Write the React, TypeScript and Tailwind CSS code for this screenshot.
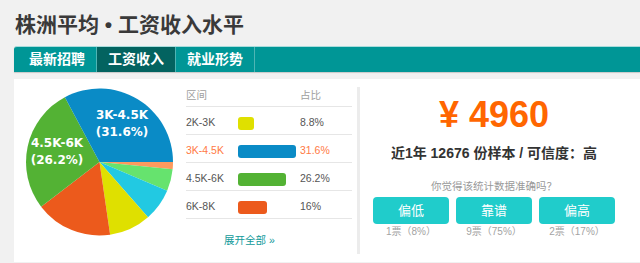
import React from "react";

const slices = [
  { from: 0, to: 5.7, color: "#fd9a5e" },
  { from: 5.7, to: 23, color: "#66e36e" },
  { from: 23, to: 48.7, color: "#22c9e2" },
  { from: 48.7, to: 81.7, color: "#dfe000" },
  { from: 81.7, to: 142.6, color: "#ec5a1c" },
  { from: 142.6, to: 241.9, color: "#53b234" },
  { from: 241.9, to: 360, color: "#0a8bc6" },
];

const rows = [
  { range: "2K-3K", pct: "8.8%", bar: "w-[16px] bg-[#dfe000]", hot: false },
  { range: "3K-4.5K", pct: "31.6%", bar: "w-[58px] bg-[#0a8bc6]", hot: true },
  { range: "4.5K-6K", pct: "26.2%", bar: "w-[48px] bg-[#53b234]", hot: false },
  { range: "6K-8K", pct: "16%", bar: "w-[29px] bg-[#ec5a1c]", hot: false },
];

const votes = [
  { label: "偏低", count: "1票（8%）" },
  { label: "靠谱", count: "9票（75%）" },
  { label: "偏高", count: "2票（17%）" },
];

function slicePath(cx: number, cy: number, r: number, a0: number, a1: number) {
  const p = (a: number) => {
    const t = (a * Math.PI) / 180;
    return `${(cx + r * Math.cos(t)).toFixed(2)} ${(cy + r * Math.sin(t)).toFixed(2)}`;
  };
  const large = a1 - a0 > 180 ? 1 : 0;
  return `M ${cx} ${cy} L ${p(a0)} A ${r} ${r} 0 ${large} 1 ${p(a1)} Z`;
}

function Pie() {
  const cx = 85.5;
  const cy = 83;
  const r = 73.5;
  return (
    <svg width="172" height="183" className="shrink-0">
      {slices.map((s) => (
        <path key={s.from} d={slicePath(cx, cy, r, s.from, s.to)} fill={s.color} />
      ))}
      <g fill="#fff" fontFamily="'DejaVu Sans', sans-serif" fontWeight="bold" fontSize="12" textAnchor="middle">
        <text x="108" y="39.5">3K-4.5K</text>
        <text x="108" y="57">(31.6%)</text>
        <text x="43" y="68">4.5K-6K</text>
        <text x="43" y="84.5">(26.2%)</text>
      </g>
    </svg>
  );
}

export default function App() {
  return (
    <div className="w-[640px] h-[263px] overflow-hidden bg-[#f1f1f1] pl-[14px] font-['Liberation_Sans','Noto_Sans_CJK_SC',sans-serif]">
      <h1 className="pt-[10px] h-[40px] leading-[30px] text-[21px] font-bold text-[#3a3a3a] pl-[1px]">
        株洲平均 • 工资收入水平
      </h1>

      {/* tabs */}
      <div className="mt-[6px] h-[26px] flex rounded-tl-[3px] bg-[#009696] border-t border-[#a9dcdc] shadow-[0_1px_1px_#c8c8c8] text-white text-[14px] font-bold">
        <div className="w-[83px] flex items-center justify-center pl-[4px] border-r border-[#4fb5b4]">最新招聘</div>
        <div className="w-[79px] flex items-center justify-center bg-[#036360] border-r border-[#4fb5b4]">工资收入</div>
        <div className="w-[79px] flex items-center justify-center border-r border-[#4fb5b4]">就业形势</div>
      </div>

      {/* panel */}
      <div className="mt-[7px] h-[183px] bg-white flex">
        <Pie />

        <div className="w-[166px] pt-[6px] text-[10.5px] text-[#555] shrink-0">
          <div className="h-[22px] flex items-center border-b border-[#e6e6e6] text-[#a0a0a0]">
            <span className="w-[114px]">区间</span>
            <span>占比</span>
          </div>
          {rows.map((r) => (
            <div
              key={r.range}
              className={`h-[28px] pt-[5px] flex items-center border-b border-[#e6e6e6] ${r.hot ? "text-[#ff7a45]" : ""}`}
            >
              <span className="w-[52px]">{r.range}</span>
              <span className="w-[62px]">
                <span className={`block h-[13px] rounded-[3px] ${r.bar}`} />
              </span>
              <span>{r.pct}</span>
            </div>
          ))}
          <div className="pl-[38px] pt-[14px] text-[#109a9a] text-[10.5px]">展开全部 »</div>
        </div>

        <div className="ml-[5px] mt-[8px] mb-[8px] w-[3px] bg-[#ececec] shrink-0" />

        <div className="w-[268px] flex flex-col items-center pt-[18px]">
          <div className="leading-[36px] text-[36px] font-bold text-[#ff6600]">¥ 4960</div>
          <div className="mt-[10px] leading-[20px] text-[14px] font-bold text-[#333]">
            近1年 12676 份样本 / 可信度：高
          </div>
          <div className="mt-[15px] leading-[16px] text-[10.5px] text-[#999]">你觉得该统计数据准确吗？</div>
          <div className="mt-[3px] flex gap-[7px]">
            {votes.map((v) => (
              <div key={v.label} className="w-[76px] flex flex-col items-center">
                <div className="w-full h-[27px] rounded-[4px] bg-[#20cccb] flex items-center justify-center text-white text-[13px]">
                  {v.label}
                </div>
                <div className="mt-[1px] leading-[14px] text-[10px] text-[#a3a3a3]">{v.count}</div>
              </div>
            ))}
          </div>
        </div>
      </div>
    </div>
  );
}
